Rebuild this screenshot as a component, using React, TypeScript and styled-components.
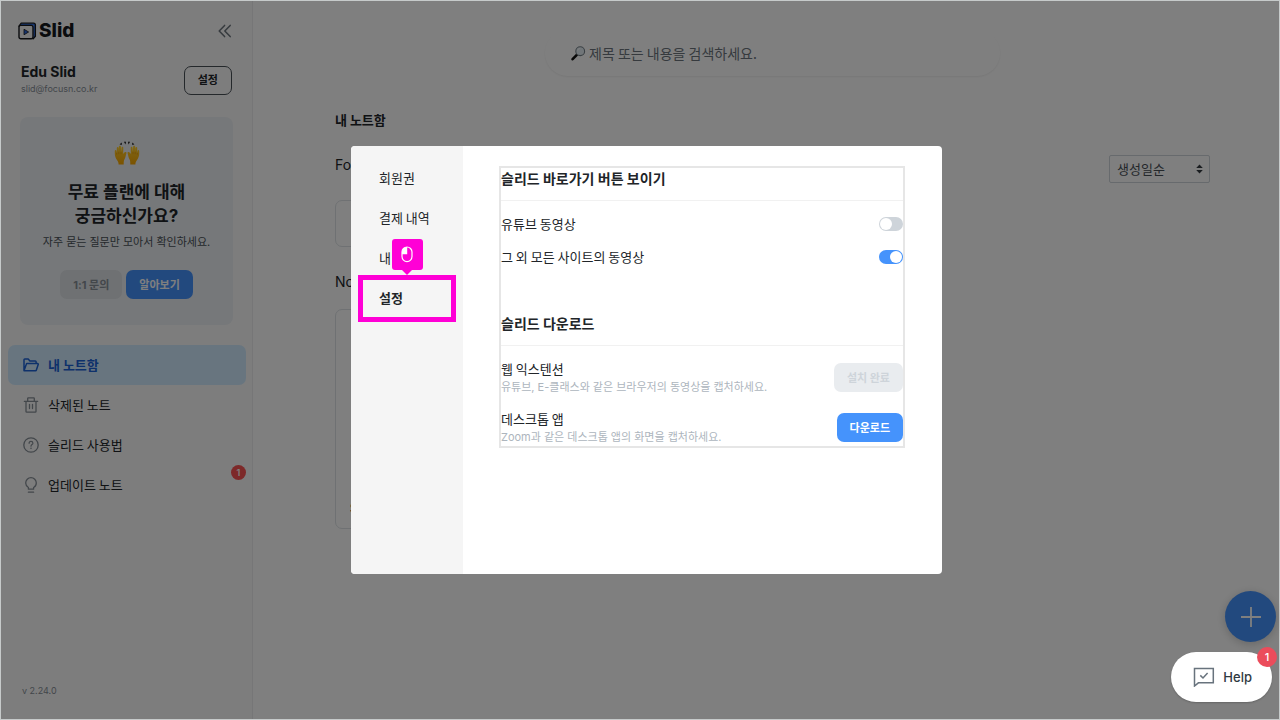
import React from "react";
import styled, { createGlobalStyle, css } from "styled-components";

const latin = `Inter, "Noto Sans CJK KR", sans-serif`;

const GlobalStyle = createGlobalStyle`
  *, *::before, *::after { box-sizing: border-box; }
  body {
    margin: 0;
    background: #ffffff;
    color: #212529;
    font-family: "Noto Sans CJK KR", Inter, sans-serif;
    font-size: 13px;
    line-height: 20px;
  }
  button, input, select { font: inherit; color: inherit; }
  h1, h2, h3, p, ul { margin: 0; padding: 0; }
  ul { list-style: none; }
  a { color: inherit; text-decoration: none; }
`;

const Frame = styled.div`
  position: relative;
  display: grid;
  grid-template-columns: 252px 1fr;
  min-height: 100vh;
  border: 1px solid #c6caca;
  background: #ffffff;
`;

/* ---------- sidebar ---------- */

const Sidebar = styled.aside`
  display: flex;
  flex-direction: column;
  padding: 18px 6px 18px 7px;
  border-right: 1px solid #ececee;
  background: #fbfbfb;
  font-family: ${latin};
`;

const BrandRow = styled.header`
  display: flex;
  align-items: center;
  justify-content: space-between;
  height: 24px;
  padding: 0 14px 0 10px;
`;

const Brand = styled.a`
  display: flex;
  align-items: center;
  gap: 2px;
  font-size: 19px;
  font-weight: 800;
  color: #16181d;
`;

const CollapseButton = styled.button`
  display: flex;
  padding: 0;
  border: 0;
  background: none;
  color: #6c757d;
`;

const Account = styled.section`
  display: flex;
  align-items: center;
  justify-content: space-between;
  margin-top: 20px;
  padding: 0 14px 0 13px;
`;

const AccountName = styled.h2`
  font-size: 14px;
  line-height: 18px;
  font-weight: 700;
`;

const AccountMail = styled.p`
  font-size: 9px;
  line-height: 16px;
  color: #868e96;
`;

type Tone = "outline" | "muted" | "primary" | "disabled";

const tones = {
  outline: css`
    border: 1px solid #495057;
    background: transparent;
    color: #212529;
  `,
  muted: css`
    background: #dee2e6;
    color: #868e96;
  `,
  primary: css`
    background: #4593fc;
    color: #ffffff;
  `,
  disabled: css`
    background: #e9ecef;
    color: #ced4da;
  `,
};

const Button = styled.button<{ $tone: Tone }>`
  height: 29px;
  padding: 0 13px;
  border: 0;
  border-radius: 7px;
  font-family: ${latin};
  font-size: 11px;
  line-height: 16px;
  font-weight: 700;
  white-space: nowrap;
  ${(p) => tones[p.$tone]}
`;

const PromoCard = styled.section`
  display: flex;
  flex-direction: column;
  align-items: center;
  margin: 20px 13px 0 12px;
  padding: 24px 0 26px;
  border-radius: 8px;
  background: #edf0f4;
  text-align: center;
`;

const PromoTitle = styled.h3`
  margin-top: 15px;
  font-size: 17px;
  line-height: 24px;
  font-weight: 700;
`;

const PromoText = styled.p`
  margin-top: 6px;
  font-size: 11px;
  line-height: 16px;
  color: #495057;
`;

const PromoActions = styled.div`
  display: flex;
  gap: 4px;
  margin-top: 20px;
`;

const Nav = styled.nav`
  margin-top: 20px;
  font-family: "Noto Sans CJK KR", Inter, sans-serif;
`;

const NavLink = styled.a<{ $active?: boolean }>`
  position: relative;
  display: flex;
  align-items: center;
  gap: 9px;
  height: 40px;
  padding-left: 15px;
  border-radius: 7px;
  background: ${(p) => (p.$active ? "#d0ebff" : "transparent")};
  color: ${(p) => (p.$active ? "#1c62d6" : "#212529")};
  font-weight: ${(p) => (p.$active ? 700 : 400)};

  svg {
    color: ${(p) => (p.$active ? "#1c62d6" : "#868e96")};
  }
`;

const Count = styled.span<{ $size: number }>`
  position: absolute;
  display: grid;
  place-items: center;
  width: ${(p) => p.$size}px;
  height: ${(p) => p.$size}px;
  border-radius: 50%;
  color: #ffffff;
  font-family: ${latin};
`;

const NavCount = styled(Count)`
  top: 0;
  right: 0;
  background: #fa5252;
  font-size: 9px;
  line-height: 14px;
  font-weight: 600;
`;

const Version = styled.p`
  margin-top: auto;
  padding-left: 14px;
  font-size: 9px;
  color: #868e96;
`;

/* ---------- main page ---------- */

const Main = styled.main`
  display: flex;
  flex-direction: column;
  padding: 29px 69px 29px 82px;
`;

const SearchBox = styled.label`
  display: flex;
  align-items: center;
  align-self: center;
  gap: 3px;
  width: 52%;
  height: 46px;
  padding: 0 26px;
  border-radius: 23px;
  box-shadow: 0 1px 2px rgba(0, 0, 0, 0.07);
`;

const SearchInput = styled.input`
  flex: 1;
  min-width: 0;
  padding: 0;
  border: 0;
  outline: 0;
  background: none;
  font-size: 14px;

  &::placeholder {
    color: #6c757d;
    opacity: 1;
  }
`;

const PageTitle = styled.h1`
  margin-top: 34px;
  font-size: 13px;
  line-height: 20px;
  font-weight: 700;
`;

const ListHeader = styled.div`
  display: flex;
  align-items: flex-start;
  justify-content: space-between;
  margin-top: 25px;
`;

const ListLabel = styled.h2`
  font-family: ${latin};
  font-size: 14px;
  line-height: 20px;
  font-weight: 400;
`;

const SortBox = styled.div`
  display: grid;
  align-items: center;
  width: 101px;

  > * {
    grid-area: 1 / 1;
  }

  > svg {
    justify-self: end;
    margin-right: 7px;
    pointer-events: none;
  }
`;

const SortSelect = styled.select`
  width: 100%;
  height: 28px;
  padding: 0 20px 0 7px;
  border: 1px solid #ced4da;
  border-radius: 2px;
  appearance: none;
  background: transparent;
  color: #495057;
  font-size: 13px;
`;

const ItemCard = styled.article<{ $tall?: boolean }>`
  display: flex;
  align-items: flex-end;
  width: 200px;
  height: ${(p) => (p.$tall ? 220 : 47)}px;
  margin-top: 17px;
  padding: 10px 14px;
  border: 1px solid #dee2e6;
  border-radius: 7px;
  font-family: ${latin};
  font-weight: 700;
`;

const FloatingAdd = styled.button`
  position: absolute;
  right: 3px;
  bottom: 77px;
  display: grid;
  place-items: center;
  width: 51px;
  height: 51px;
  padding: 0;
  border: 0;
  border-radius: 50%;
  background: #4593fc;
  box-shadow: 0 2px 10px rgba(0, 0, 0, 0.2);
  color: #ffffff;
`;

/* ---------- modal ---------- */

const Backdrop = styled.div`
  position: absolute;
  inset: 0;
  display: flex;
  align-items: center;
  justify-content: center;
  padding-left: 13px;
  background: rgba(0, 0, 0, 0.5);
`;

const Modal = styled.section`
  display: grid;
  grid-template-columns: 112px 1fr;
  width: 591px;
  max-width: 100%;
  min-height: 428px;
  border-radius: 4px;
  background: #ffffff;
`;

const ModalNav = styled.nav`
  padding-top: 12px;
  border-radius: 4px 0 0 4px;
  background: #f5f5f5;
`;

const ModalTab = styled.li`
  position: relative;
`;

const TabLink = styled.a<{ $active?: boolean }>`
  display: flex;
  align-items: center;
  height: 40px;
  padding-left: 28px;
  font-weight: ${(p) => (p.$active ? 700 : 400)};
`;

const Spotlight = styled.div`
  position: absolute;
  inset: -3px 7px -4px;
  display: flex;
  justify-content: center;
  border: 5px solid #ff00d6;
  pointer-events: none;
`;

const ClickMarker = styled.div`
  position: absolute;
  bottom: 47px;
  display: grid;
  place-items: center;
  width: 31px;
  height: 31px;
  border-radius: 3px;
  background: #ff00d6;

  &::after {
    content: "";
    position: absolute;
    top: 100%;
    border: 5px solid transparent;
    border-top-color: #ff00d6;
  }
`;

const ModalBody = styled.div`
  padding: 20px 37px 20px 36px;
`;

const Panel = styled.div`
  border: 2px solid #e6e6e6;
`;

const Group = styled.section`
  & + & {
    margin-top: 46px;
  }
`;

const GroupTitle = styled.h2`
  padding-bottom: 10px;
  border-bottom: 1px solid #f1f1f1;
  font-family: ${latin};
  font-size: 14px;
  line-height: 22px;
  font-weight: 700;
`;

const Rows = styled.div`
  display: flex;
  flex-direction: column;
  gap: 13px;
  padding-top: 13px;
`;

const Row = styled.div`
  display: flex;
  align-items: center;
  justify-content: space-between;
`;

const Hint = styled.p`
  font-family: ${latin};
  font-size: 11px;
  line-height: 17px;
  color: #adb5bd;
`;

const Switch = styled.input`
  width: 24px;
  height: 14px;
  margin: 0;
  padding: 1px;
  border-radius: 7px;
  appearance: none;
  background: #ced4da;

  &::before {
    content: "";
    display: block;
    width: 12px;
    height: 12px;
    border-radius: 50%;
    background: #ffffff;
  }

  &:checked {
    background: #4593fc;
  }

  &:checked::before {
    margin-left: auto;
  }
`;

/* ---------- help launcher ---------- */

const HelpButton = styled.button`
  position: absolute;
  right: 7px;
  bottom: 17px;
  display: flex;
  align-items: center;
  gap: 8px;
  height: 50px;
  padding: 0 20px 0 22px;
  border: 0;
  border-radius: 25px;
  background: #ffffff;
  box-shadow: 0 1px 2px rgba(0, 0, 0, 0.2);
  color: #2f3941;
  font-family: ${latin};
  font-size: 13px;
  font-weight: 500;
`;

const HelpCount = styled(Count)`
  top: -5px;
  right: -5px;
  background: #eb4c5b;
  font-size: 11px;
`;

/* ---------- drawings ---------- */

const line = {
  fill: "none",
  stroke: "currentColor",
  strokeLinecap: "round",
  strokeLinejoin: "round",
} as const;

const LogoMark = () => (
  <svg width="19" height="18" viewBox="0 0 19 18" aria-hidden="true">
    <path d="M3.5 1.4h12.2a1.6 1.6 0 0 1 1.6 1.6v11.6l-2 1.8V3.2H2z" fill="#2c6be0" />
    <path d="M1 4.2 3.2 1.2h12.3a1.9 1.9 0 0 1 1.9 1.9v11.2l-2.2 2.4" {...line} stroke="#16181d" strokeWidth="1.3" />
    <rect x="1" y="3.4" width="14" height="13.4" rx="1.8" fill="#f4f4f4" stroke="#16181d" strokeWidth="1.4" />
    <path d="M6 7.2v5.6l4.6-2.8z" fill="#2c6be0" stroke="#16181d" strokeWidth=".8" strokeLinejoin="round" />
  </svg>
);

const CollapseIcon = () => (
  <svg width="14" height="14" viewBox="0 0 14 14" aria-hidden="true">
    <path d="M6.6 1.4 1.2 7l5.4 5.600M12.200 1.400 6.800 7l5.400 5.600" {...line} strokeWidth="1.5" />
  </svg>
);

const HandsIcon = () => (
  <svg width="26" height="24" viewBox="0 0 26 24" aria-hidden="true">
    <defs>
      <linearGradient id="skin" x1="0" y1="0" x2="0" y2="1">
        <stop offset="0" stopColor="#ffd02e" />
        <stop offset="1" stopColor="#f7a600" />
      </linearGradient>
      <g id="hand">
        <path
          d="M4.6 23.4c0-1.600-.3-2.700-1.300-4C1.600 17.200.8 15 .8 12.500V10c0-1.300 1.500-1.300 1.700 0l.3 2V7c0-1.400 1.700-1.400 1.900 0l.2 3.600V5.700c0-1.400 1.900-1.400 2 0l.2 5 .4-3.900c.1-1.300 1.800-1.200 1.800.1l-.1 6c.5-.9 1.200-1.500 2-1.800.9-.3 1.500.4 1.200 1.200-.8 2.300-.7 4.400-2 6.300-.6 1-.7 2.600-.7 4.800z"
          fill="url(#skin)"
        />
        <path d="M4.800 10.800v2.400M7 10.800v2.400M2.700 11.800v1.800" stroke="#d98500" strokeWidth=".5" />
      </g>
    </defs>
    <use href="#hand" />
    <use href="#hand" transform="translate(26 0) scale(-1 1)" />
    <path d="m5.600 3.600 1.900-2.200.5 2.300zM10 .8h2l-.6 2.600zM14 .8h2l-1.400 2.600zM18 3.700l.5-2.300 1.900 2.200z" fill="#111" />
  </svg>
);

const MagnifierIcon = () => (
  <svg width="15" height="16" viewBox="0 0 15 16" aria-hidden="true">
    <path d="m1.600 14.200 4.200-4.400" stroke="#111" strokeWidth="2.600" strokeLinecap="round" />
    <circle cx="9.200" cy="6.200" r="4.400" fill="#e3edf3" stroke="#76828a" strokeWidth="1.100" />
    <path d="M6.600 5.600a2.800 2.800 0 0 1 2.600-2.200" fill="none" stroke="#fff" strokeWidth=".9" />
  </svg>
);

const FolderIcon = () => (
  <svg width="16" height="16" viewBox="0 0 16 16" aria-hidden="true">
    <path
      d="M1 13.200V2.800c0-.5.300-.8.800-.8h3.400l1.700 1.900h5.400c.5 0 .8.300.8.800v1.900M1 13.700l2.300-6.500c.1-.4.400-.6.800-.6h10.500c.5 0 .8.400.6.900l-1.800 5.500c-.1.400-.5.700-.9.700H1z"
      {...line}
      strokeWidth="1.500"
    />
  </svg>
);

const TrashIcon = () => (
  <svg width="16" height="16" viewBox="0 0 16 16" aria-hidden="true">
    <path
      d="M1.300 4.300h13.400M4.700 4.100V1.400c0-.3.200-.6.600-.6h5.400c.4 0 .6.300.6.600v2.700M3 4.500v10c0 .4.300.7.700.7h8.600c.4 0 .7-.3.700-.7v-10M6.500 7.300v4.200M9.500 7.300v4.200"
      {...line}
      strokeWidth="1.300"
    />
  </svg>
);

const QuestionIcon = () => (
  <svg width="16" height="16" viewBox="0 0 16 16" aria-hidden="true">
    <circle cx="8" cy="8" r="7.200" {...line} strokeWidth="1.300" />
    <path d="M6.100 6.300c0-1.200.8-1.900 1.900-1.900s1.900.7 1.900 1.800c0 1.400-1.900 1.400-1.900 3" {...line} strokeWidth="1.200" />
    <circle cx="8" cy="11.300" r=".8" fill="currentColor" />
  </svg>
);

const BulbIcon = () => (
  <svg width="16" height="16" viewBox="0 0 16 16" aria-hidden="true">
    <path
      d="M5.400 12.200v-1.700A5.300 5.300 0 0 1 2.700 6a5.300 5.300 0 0 1 10.600 0c0 1.900-1 3.600-2.700 4.500v1.700zM5.400 15.200h5.200"
      {...line}
      strokeWidth="1.300"
    />
  </svg>
);

const SortArrows = () => (
  <svg width="7" height="10" viewBox="0 0 7 10" aria-hidden="true">
    <path d="M3.500.5 6.800 4H.2zM3.500 9.500.2 6h6.600z" fill="#343a40" />
  </svg>
);

const PlusIcon = () => (
  <svg width="22" height="22" viewBox="0 0 22 22" aria-hidden="true">
    <path d="M11 1v20M1 11h20" stroke="currentColor" strokeWidth="1.800" />
  </svg>
);

const MouseIcon = () => (
  <svg width="12" height="17" viewBox="0 0 12 17" aria-hidden="true">
    <rect x="1" y="1" width="10" height="14.600" rx="5" fill="none" stroke="#fff" strokeWidth="1.200" />
    <path d="M6.200 1v7.200H1V6a5 5 0 0 1 5.200-5z" fill="#fff" />
  </svg>
);

const ChatIcon = () => (
  <svg width="22" height="20" viewBox="0 0 22 20" aria-hidden="true">
    <path d="M1.500 1.500h18.800v14.300H5.400L1.500 19z" fill="none" stroke="#68737d" strokeWidth="1.500" />
    <path d="m7.300 8.400 2.700 2.600 4.600-4.900" fill="none" stroke="#68737d" strokeWidth="1.500" />
  </svg>
);

const navItems = [
  { label: "내 노트함", Icon: FolderIcon, active: true },
  { label: "삭제된 노트", Icon: TrashIcon },
  { label: "슬리드 사용법", Icon: QuestionIcon },
  { label: "업데이트 노트", Icon: BulbIcon, count: 1 },
];

const tabs = ["회원권", "결제 내역", "내 정보", "설정"];

export default function App() {
  return (
    <>
      <GlobalStyle />
      <Frame>
        <Sidebar>
          <BrandRow>
            <Brand href="#home">
              <LogoMark />
              Slid
            </Brand>
            <CollapseButton type="button" aria-label="사이드바 접기">
              <CollapseIcon />
            </CollapseButton>
          </BrandRow>

          <Account>
            <div>
              <AccountName>Edu Slid</AccountName>
              <AccountMail>slid@focusn.co.kr</AccountMail>
            </div>
            <Button type="button" $tone="outline">설정</Button>
          </Account>

          <PromoCard>
            <HandsIcon />
            <PromoTitle>
              무료 플랜에 대해
              <br />
              궁금하신가요?
            </PromoTitle>
            <PromoText>자주 묻는 질문만 모아서 확인하세요.</PromoText>
            <PromoActions>
              <Button type="button" $tone="muted">1:1 문의</Button>
              <Button type="button" $tone="primary">알아보기</Button>
            </PromoActions>
          </PromoCard>

          <Nav>
            <ul>
              {navItems.map(({ label, Icon, active, count }) => (
                <li key={label}>
                  <NavLink href="#notes" $active={active}>
                    <Icon />
                    {label}
                    {count && <NavCount $size={15}>{count}</NavCount>}
                  </NavLink>
                </li>
              ))}
            </ul>
          </Nav>

          <Version>v 2.24.0</Version>
        </Sidebar>

        <Main>
          <SearchBox>
            <MagnifierIcon />
            <SearchInput type="text" aria-label="검색" placeholder="제목 또는 내용을 검색하세요." />
          </SearchBox>
          <PageTitle>내 노트함</PageTitle>
          <ListHeader>
            <ListLabel>Folder</ListLabel>
            <SortBox>
              <SortSelect aria-label="정렬" defaultValue="created">
                <option value="created">생성일순</option>
              </SortSelect>
              <SortArrows />
            </SortBox>
          </ListHeader>
          <ItemCard />
          <ListHeader>
            <ListLabel>Note</ListLabel>
          </ListHeader>
          <ItemCard $tall>Slid</ItemCard>
        </Main>

        <FloatingAdd type="button" aria-label="새 노트">
          <PlusIcon />
        </FloatingAdd>

        <Backdrop>
          <Modal role="dialog" aria-label="설정">
            <ModalNav>
              <ul>
                {tabs.map((tab) => {
                  const active = tab === "설정";
                  return (
                    <ModalTab key={tab}>
                      <TabLink href="#settings" $active={active}>{tab}</TabLink>
                      {active && (
                        <Spotlight>
                          <ClickMarker>
                            <MouseIcon />
                          </ClickMarker>
                        </Spotlight>
                      )}
                    </ModalTab>
                  );
                })}
              </ul>
            </ModalNav>
            <ModalBody>
              <Panel>
                <Group>
                  <GroupTitle>슬리드 바로가기 버튼 보이기</GroupTitle>
                  <Rows>
                    <Row as="label">
                      유튜브 동영상
                      <Switch type="checkbox" />
                    </Row>
                    <Row as="label">
                      그 외 모든 사이트의 동영상
                      <Switch type="checkbox" defaultChecked />
                    </Row>
                  </Rows>
                </Group>
                <Group>
                  <GroupTitle>슬리드 다운로드</GroupTitle>
                  <Rows>
                    <Row>
                      <div>
                        <p>웹 익스텐션</p>
                        <Hint>유튜브, E-클래스와 같은 브라우저의 동영상을 캡처하세요.</Hint>
                      </div>
                      <Button type="button" $tone="disabled" disabled>설치 완료</Button>
                    </Row>
                    <Row>
                      <div>
                        <p>데스크톱 앱</p>
                        <Hint>Zoom과 같은 데스크톱 앱의 화면을 캡처하세요.</Hint>
                      </div>
                      <Button type="button" $tone="primary">다운로드</Button>
                    </Row>
                  </Rows>
                </Group>
              </Panel>
            </ModalBody>
          </Modal>
        </Backdrop>

        <HelpButton type="button">
          <ChatIcon />
          Help
          <HelpCount $size={20}>1</HelpCount>
        </HelpButton>
      </Frame>
    </>
  );
}
